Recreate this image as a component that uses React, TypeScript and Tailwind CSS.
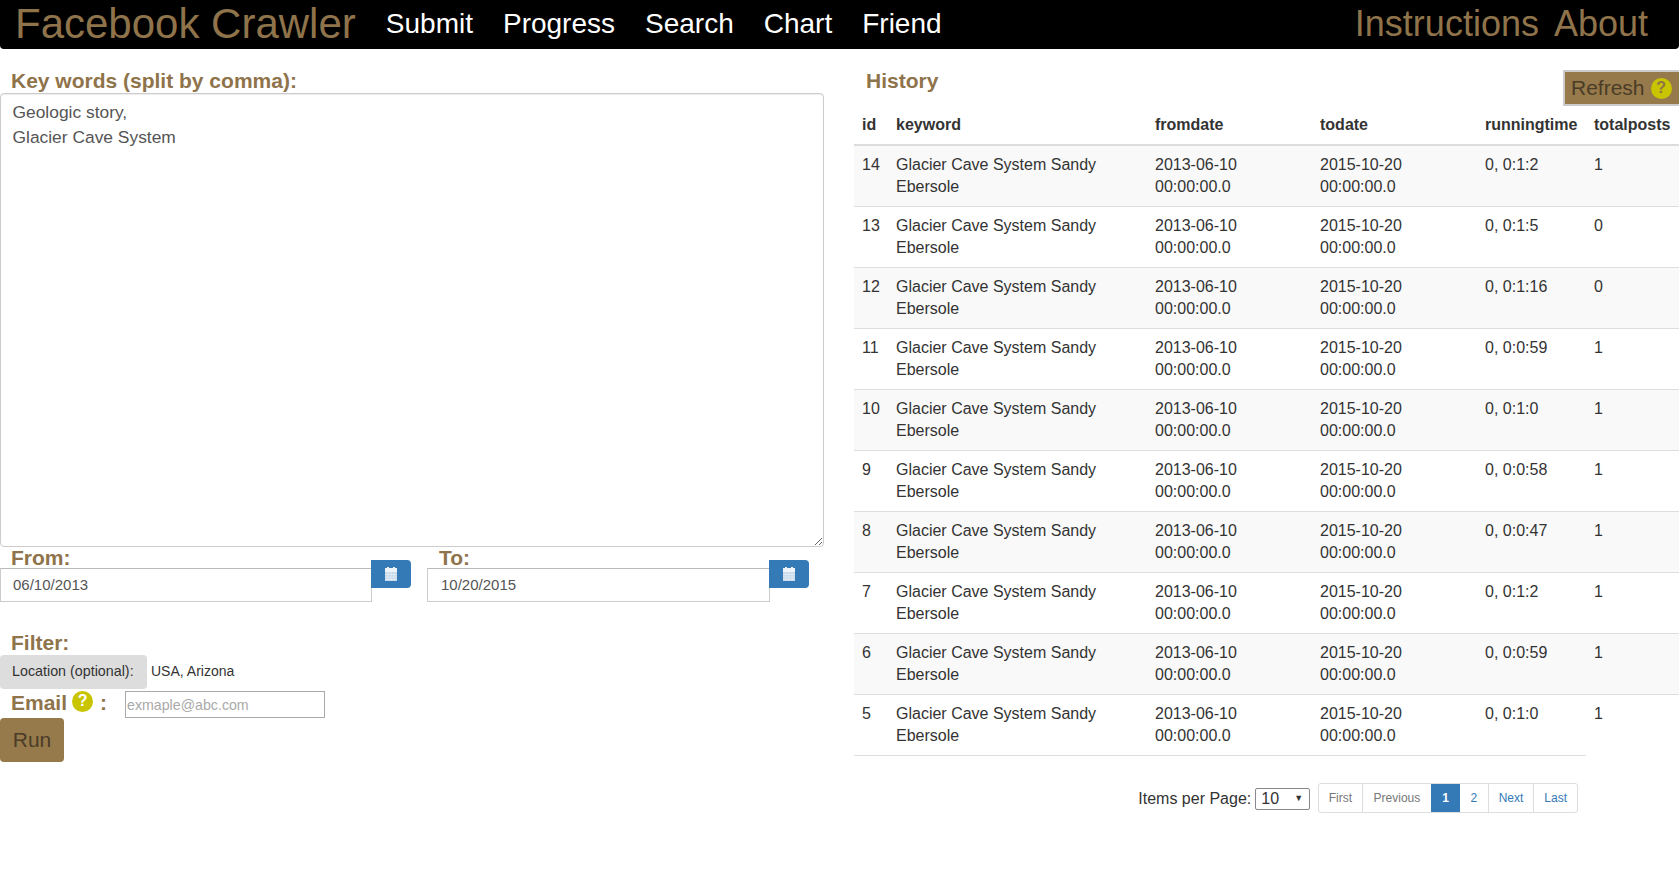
const rows = [
  { id: 14, time: '0, 0:1:2', posts: 1 },
  { id: 13, time: '0, 0:1:5', posts: 0 },
  { id: 12, time: '0, 0:1:16', posts: 0 },
  { id: 11, time: '0, 0:0:59', posts: 1 },
  { id: 10, time: '0, 0:1:0', posts: 1 },
  { id: 9, time: '0, 0:0:58', posts: 1 },
  { id: 8, time: '0, 0:0:47', posts: 1 },
  { id: 7, time: '0, 0:1:2', posts: 1 },
  { id: 6, time: '0, 0:0:59', posts: 1 },
  { id: 5, time: '0, 0:1:0', posts: 1 },
];

function HelpIcon({ className }: { className: string }) {
  return (
    <span className={`inline-flex items-center justify-center w-[21px] h-[21px] rounded-full bg-[#c9c400] text-[16px] font-bold leading-none ${className}`}>?</span>
  );
}

function CalendarButton() {
  return (
    <button className="w-[40px] h-[28px] shrink-0 mt-[-8px] ml-[-1px] bg-[#337ab7] rounded-r-[4px] flex items-center justify-center">
      <svg width="14" height="14" viewBox="0 0 14 14">
        <rect x="3" y="0" width="2" height="2" fill="#eef4f9" />
        <rect x="9" y="0" width="2" height="2" fill="#eef4f9" />
        <rect x="1" y="1" width="12" height="4" fill="#eef4f9" />
        <rect x="1" y="5" width="12" height="9" fill="#c3d8ea" />
        <path d="M1 7.5h12M1 10h12M1 12.5h12M4 5v9M7 5v9M10 5v9" stroke="#eef4f9" strokeWidth="0.6" />
      </svg>
    </button>
  );
}

export default function App() {
  return (
    <div className="w-[1679px] h-[879px] overflow-hidden bg-white font-['Liberation_Sans',Arial,sans-serif] text-[#333]">
      <nav className="h-[49px] bg-black rounded-b-[4px] flex items-center pl-[15px] pr-[31px]">
        <span className="text-[42px] text-[#8f734a] mr-[30px] whitespace-nowrap mt-[-3px]">Facebook Crawler</span>
        <div className="flex gap-[30px] text-[28px] text-white mt-[-2px]">
          <span>Submit</span>
          <span>Progress</span>
          <span>Search</span>
          <span>Chart</span>
          <span>Friend</span>
        </div>
        <div className="ml-auto flex gap-[15px] text-[36px] text-[#8f734a] mt-[-2px]">
          <span>Instructions</span>
          <span>About</span>
        </div>
      </nav>

      <div className="flex">
        <section className="w-[854px] shrink-0">
          <div className="w-[824px]">
            <h2 className="pl-[11px] pt-[20px] pb-px text-[21px] leading-[23px] font-bold text-[#8f734a]">Key words (split by comma):</h2>
            <textarea
              readOnly
              className="block w-full h-[454px] border border-[#ccc] rounded-[4px] pl-[11.5px] pr-3 py-[6px] text-[17.4px] leading-[25px] text-[#555] shadow-[inset_0_1px_1px_rgba(0,0,0,0.075)]"
              value={'Geologic story,\nGlacier Cave System'}
            />
            <div className="flex">
              <div className="w-[427px] shrink-0">
                <div className="pl-[11px] pt-px text-[21px] leading-[20px] font-bold text-[#8f734a]">From:</div>
                <div className="flex">
                  <input readOnly value="06/10/2013" className="w-[372px] h-[34px] border border-[#ccc] border-t-[#bbb] pl-3 pb-[2px] text-[15px] text-[#555]" />
                  <CalendarButton />
                </div>
              </div>
              <div className="w-[397px]">
                <div className="pl-[12px] pt-px text-[21px] leading-[20px] font-bold text-[#8f734a]">To:</div>
                <div className="flex">
                  <input readOnly value="10/20/2015" className="w-[343px] h-[34px] border border-[#ccc] border-t-[#bbb] pl-[13px] pb-[2px] text-[15px] text-[#555]" />
                  <CalendarButton />
                </div>
              </div>
            </div>
          </div>

          <div className="pl-[11px] pt-[29px] pb-px text-[21px] leading-[23px] font-bold text-[#8f734a]">Filter:</div>
          <div className="flex items-center">
            <span className="w-[147px] h-[34px] bg-[#ddd] rounded-[4px] flex items-center pl-3 text-[14.3px] whitespace-nowrap">Location (optional):</span>
            <span className="ml-[4px] text-[14px] mt-[-2px]">USA, Arizona</span>
          </div>
          <div className="flex items-center h-[29px] pl-[11px]">
            <span className="text-[21px] font-bold text-[#8f734a] mt-[-2px]">Email</span>
            <HelpIcon className="ml-[5px] mt-[-5px] text-white" />
            <span className="ml-[7px] text-[21px] font-bold text-[#8f734a] mt-[-2px]">:</span>
            <input
              placeholder="exmaple@abc.com"
              className="ml-[18px] mt-[2px] w-[200px] h-[27px] border border-[#aaa] px-[1px] text-[14.2px] placeholder:text-[#a9a9a9]"
            />
          </div>
          <button className="w-[64px] h-[44px] bg-[#967a4c] rounded-[4px] text-[21px] text-[#4a3c26]">Run</button>
        </section>

        <section className="flex-1 min-w-0">
          <div className="relative h-[65px]">
            <h2 className="pl-[12px] pt-[20px] text-[21px] leading-[23px] font-bold text-[#8f734a]">History</h2>
            <button className="absolute right-0 top-[21px] w-[116px] h-[36px] bg-[#967a4c] border-2 border-[#ccc] border-r-0 flex items-center pl-[6px] gap-[6px] text-[21px] text-[#4a3c26]">
              Refresh
              <HelpIcon className="text-[#8f734a]" />
            </button>
          </div>
          <table className="border-collapse table-fixed w-[825px] text-[16px] leading-[22px]">
            <colgroup>
              <col className="w-[34px]" />
              <col className="w-[259px]" />
              <col className="w-[165px]" />
              <col className="w-[165px]" />
              <col className="w-[109px]" />
              <col className="w-[93px]" />
            </colgroup>
            <thead>
              <tr className="h-[21px] border-b-2 border-[#ddd] text-left">
                {['id', 'keyword', 'fromdate', 'todate', 'runningtime', 'totalposts'].map((h) => (
                  <th key={h} className="pl-[8px] pb-[8px] pt-0 font-bold whitespace-nowrap">{h}</th>
                ))}
              </tr>
            </thead>
            <tbody>
              {rows.map((r, i) => (
                <tr key={r.id} className={`h-[61px] align-top ${i < rows.length - 1 ? 'border-b border-[#ddd]' : ''} ${i % 2 === 0 ? 'bg-[#f9f9f9]' : ''}`}>
                  <td className="pl-[8px] pt-[8px]">{r.id}</td>
                  <td className="pl-[8px] pt-[8px]">Glacier Cave System Sandy<br />Ebersole</td>
                  <td className="pl-[8px] pt-[8px]">2013-06-10<br />00:00:00.0</td>
                  <td className="pl-[8px] pt-[8px]">2015-10-20<br />00:00:00.0</td>
                  <td className="pl-[8px] pt-[8px]">{r.time}</td>
                  <td className="pl-[8px] pt-[8px]">{r.posts}</td>
                </tr>
              ))}
            </tbody>
          </table>
          <div className="w-[732px] h-px bg-[#ddd]" />
          <div className="flex items-center justify-end w-[724px] mt-[27px] text-[16px]">
            <span className="mt-[2px]">Items per Page:</span>
            <span className="ml-[4px] mt-[2px] w-[55px] h-[22px] border border-[#888] rounded-[2px] flex items-center justify-between pl-[5px] pr-[6px]">
              10<span className="text-[9px]">▼</span>
            </span>
            <div className="ml-[8px] flex h-[30px] border border-[#ddd] rounded-[3px] text-[12px] text-[#337ab7]">
              <span className="px-[9.5px] flex items-center text-[#777]">First</span>
              <span className="px-[11px] flex items-center border-l border-[#ddd] text-[#777]">Previous</span>
              <span className="px-[11px] flex items-center bg-[#337ab7] text-white font-bold">1</span>
              <span className="px-[10.5px] flex items-center">2</span>
              <span className="px-[10px] flex items-center border-l border-[#ddd]">Next</span>
              <span className="px-[10px] flex items-center border-l border-[#ddd]">Last</span>
            </div>
          </div>
        </section>
      </div>
    </div>
  );
}
